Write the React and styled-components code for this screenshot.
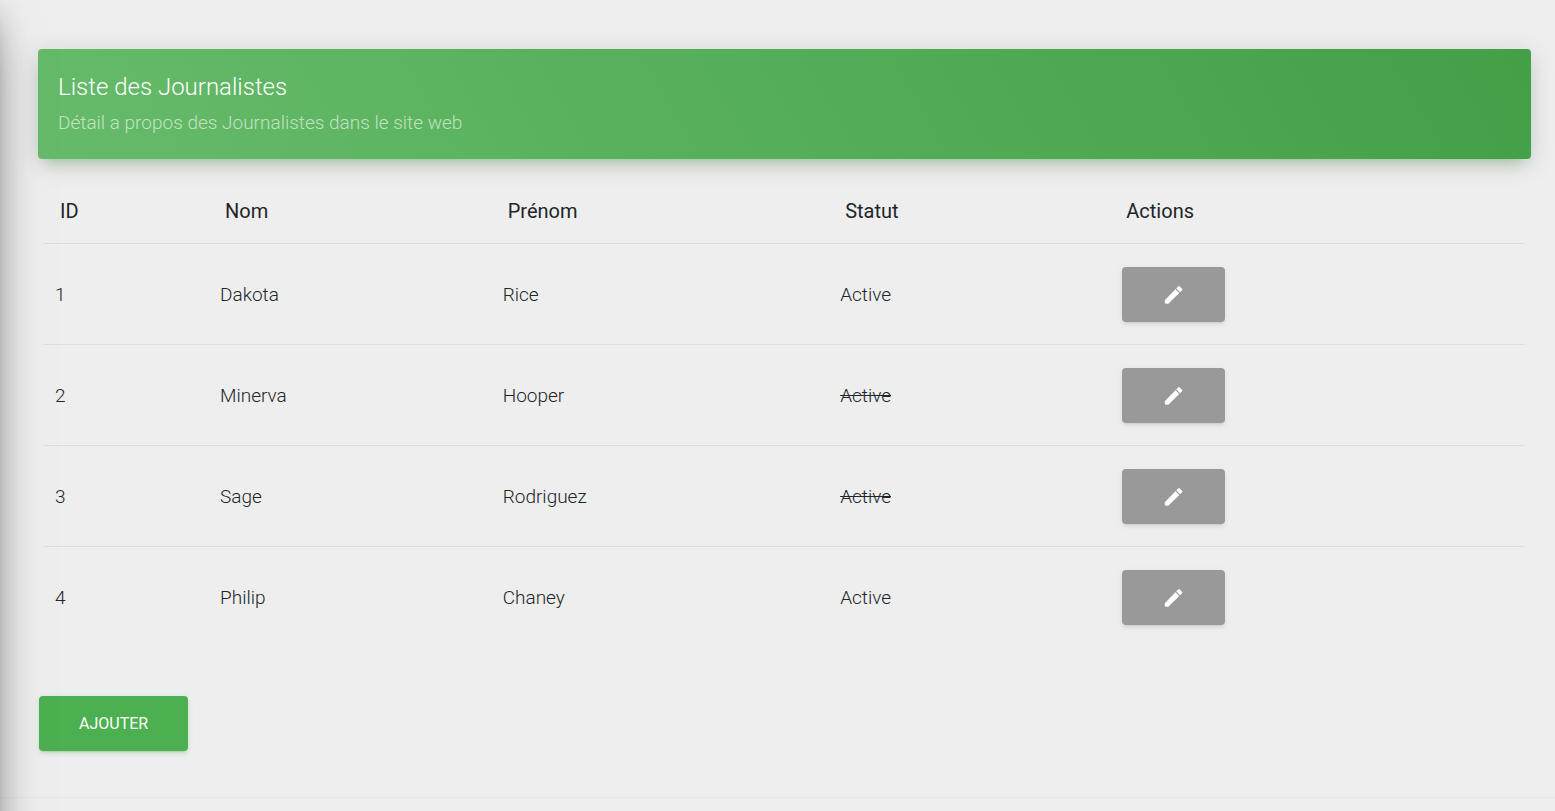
import React from "react";
import styled, { createGlobalStyle } from "styled-components";

const GlobalStyle = createGlobalStyle`
  * { box-sizing: border-box; }
  body {
    margin: 0;
    background: #eee;
    color: #212529;
    font-family: Roboto, "Liberation Sans", sans-serif;
    font-weight: 300;
    font-size: 19px;
    line-height: 27px;
  }
`;

const Page = styled.div`
  min-height: 100vh;
  display: flex;
  flex-direction: column;
`;

/* Closed drawer: only its shadow reaches into the page. */
const Drawer = styled.aside`
  position: fixed;
  top: 0;
  bottom: -80px;
  left: -340px;
  width: 340px;
  z-index: 1;
  pointer-events: none;
  box-shadow:
    0 21px 51px -16px rgba(0, 0, 0, 0.56),
    0 5px 33px rgba(0, 0, 0, 0.12),
    0 11px 13px -7px rgba(0, 0, 0, 0.2);
`;

const Main = styled.main`
  flex: 1;
  padding: 49px 24px 46px 38px;
`;

const Banner = styled.header`
  height: 110px;
  padding: 21px 20px;
  border-radius: 4px;
  color: #fff;
  background: linear-gradient(60deg, #66bb6a, #43a047);
  box-shadow: 0 5px 27px rgba(0, 0, 0, 0.14), 0 9px 13px -7px rgba(76, 175, 80, 0.4);
`;

const Title = styled.h4`
  margin: 0;
  font-size: 24px;
  line-height: 35px;
  font-weight: 300;
`;

const Subtitle = styled.p`
  margin: 4px 0 0;
  color: rgba(255, 255, 255, 0.62);
`;

const Table = styled.table`
  width: calc(100% - 13px);
  margin: 20px 7px 0 6px;
  border-collapse: collapse;
  table-layout: fixed;
`;

const Col = styled.col`
  width: ${(p) => p.$width};
`;

const HeadCell = styled.th`
  height: 64px;
  padding: 1px 16px 0;
  text-align: left;
  font-size: 20px;
  font-weight: 400;
`;

const Cell = styled.td`
  height: 101px;
  padding: 1px 11px 0;
  border-top: 1px solid #ddd;
`;

const Button = styled.button`
  display: inline-flex;
  align-items: center;
  justify-content: center;
  height: 55px;
  margin: 0 1px;
  padding: 0 40px;
  border: 0;
  border-radius: 4px;
  color: #fff;
  background: rgb(${(p) => (p.$primary ? "76, 175, 80" : "153, 153, 153")});
  box-shadow:
    0 3px 3px rgba(${(p) => (p.$primary ? "76, 175, 80" : "153, 153, 153")}, 0.14),
    0 4px 1px -3px rgba(${(p) => (p.$primary ? "76, 175, 80" : "153, 153, 153")}, 0.2),
    0 1px 7px rgba(${(p) => (p.$primary ? "76, 175, 80" : "153, 153, 153")}, 0.12);
  font: 400 16px/20px Roboto, "Liberation Sans", sans-serif;
  text-transform: uppercase;
  vertical-align: middle;
  cursor: pointer;
`;

const Actions = styled.div`
  margin-top: 49px;
`;

const Footer = styled.footer`
  height: 14px;
  border-top: 1px solid #e7e7e7;
`;

const Icon = styled.svg`
  width: 23px;
  height: 24px;
  fill: currentColor;
  stroke: currentColor;
  stroke-width: 0.5;
  stroke-linejoin: round;
`;

const journalists = [
  { id: 1, nom: "Dakota", prenom: "Rice", active: true },
  { id: 2, nom: "Minerva", prenom: "Hooper", active: false },
  { id: 3, nom: "Sage", prenom: "Rodriguez", active: false },
  { id: 4, nom: "Philip", prenom: "Chaney", active: true },
];

const PencilIcon = () => (
  <Icon viewBox="0 -1 24 24" aria-hidden="true">
    <path d="M3.2 17.5V20q0 .8.8.8h2.6L17.81 9.94l-3.75-3.75L3.2 17.5zM20.71 7.04a1 1 0 0 0 0-1.41l-2.34-2.34a1 1 0 0 0-1.41 0l-1.83 1.83 3.75 3.75 1.83-1.83z" />
  </Icon>
);

export default function App() {
  return (
    <>
      <GlobalStyle />
      <Drawer />
      <Page>
        <Main>
          <Banner>
            <Title>Liste des Journalistes</Title>
            <Subtitle>Détail a propos des Journalistes dans le site web</Subtitle>
          </Banner>
          <Table>
            <colgroup>
              <Col $width="11.15%" />
              <Col $width="19.1%" />
              <Col $width="22.8%" />
              <Col $width="19%" />
              <Col />
            </colgroup>
            <thead>
              <tr>
                {["ID", "Nom", "Prénom", "Statut", "Actions"].map((label) => (
                  <HeadCell key={label} scope="col">{label}</HeadCell>
                ))}
              </tr>
            </thead>
            <tbody>
              {journalists.map((j) => (
                <tr key={j.id}>
                  <Cell>{j.id}</Cell>
                  <Cell>{j.nom}</Cell>
                  <Cell>{j.prenom}</Cell>
                  <Cell>{j.active ? "Active" : <del>Active</del>}</Cell>
                  <Cell>
                    <Button type="button" aria-label={`Modifier ${j.nom} ${j.prenom}`}>
                      <PencilIcon />
                    </Button>
                  </Cell>
                </tr>
              ))}
            </tbody>
          </Table>
          <Actions>
            <Button type="button" $primary>Ajouter</Button>
          </Actions>
        </Main>
        <Footer />
      </Page>
    </>
  );
}
